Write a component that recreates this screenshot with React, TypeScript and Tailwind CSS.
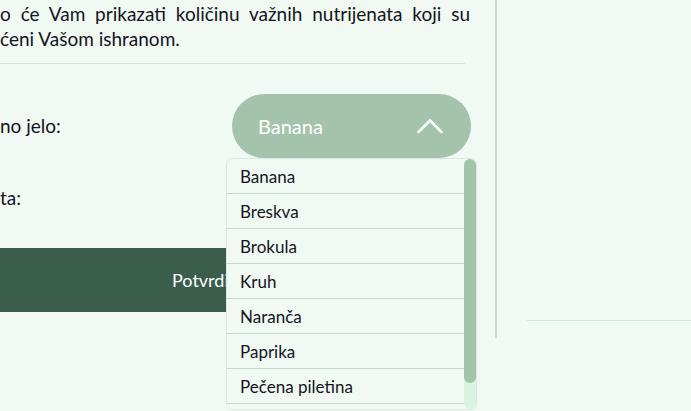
import { useState } from 'react'

const foods = ['Banana', 'Breskva', 'Brokula', 'Kruh', 'Naranča', 'Paprika', 'Pečena piletina']

function ChevronUp() {
  return (
    <svg width="26" height="16" viewBox="0 0 26 16" fill="none">
      <polyline points="1.5,14 13,2.5 24.5,14" stroke="#ffffff" strokeWidth="2.6" strokeLinecap="round" strokeLinejoin="round" />
    </svg>
  )
}

export default function App() {
  const [selected, setSelected] = useState('Banana')

  return (
    <div className="flex h-[411px] w-[691px] overflow-hidden bg-[#f0faf2] font-['Lato','Noto_Sans',sans-serif] text-[#141424]">
      {/* left column */}
      <div className="relative w-[495px] shrink-0">
        <div className="w-[471px] pt-[1px] text-[19px] leading-[25px]">
          <p className="text-justify [text-align-last:justify] w-[470px]">o će Vam prikazati količinu važnih nutrijenata koji su</p>
          <p>ćeni Vašom ishranom.</p>
        </div>
        <div className="mt-[12px] h-px w-[465px] bg-[#cfe6d6]" />

        <div className="mt-[30px] flex h-[64px] w-[471px] items-center justify-between">
          <span className="text-[19px] leading-[26px]">no jelo:</span>
          <button className="flex h-[64px] w-[239px] items-center justify-between rounded-full bg-[#a3c4aa] pl-[26px] pr-[28px] text-[20px] text-white">
            <span>{selected}</span>
            <ChevronUp />
          </button>
        </div>

        <div className="mt-[8px] flex h-[64px] w-[471px] items-center">
          <span className="text-[19px] leading-[26px]">ta:</span>
        </div>

        <button className="mt-[18px] flex h-[64px] w-[465px] items-center bg-[#3a5e4b] pl-[172px] text-[18px] text-white">
          Potvrdi
        </button>

        {/* dropdown */}
        <div className="absolute left-[226px] top-[158px] h-[252px] w-[251px] overflow-hidden rounded-[6px] border border-[#dbe8df] bg-[#f0faf2]">
          <ul className="pr-[12px]">
            {foods.map((f) => (
              <li
                key={f}
                onClick={() => setSelected(f)}
                className="flex h-[35px] cursor-pointer items-center border-b border-[#c3d9c9] pl-[13px] text-[17px] leading-none"
              >
                {f}
              </li>
            ))}
          </ul>
          <div className="absolute right-0 top-0 h-full w-[12px] rounded-full bg-[#dbf2e2]">
            <div className="h-[224px] w-full rounded-full bg-[#a3c4aa]" />
          </div>
        </div>
      </div>

      {/* divider */}
      <div className="h-[338px] w-[2px] shrink-0 bg-[#c9d9cd]" />

      {/* right pane */}
      <div className="flex-1 pl-[30px] pt-[320px]">
        <div className="h-px w-full bg-[#cce9d8]" />
      </div>
    </div>
  )
}
